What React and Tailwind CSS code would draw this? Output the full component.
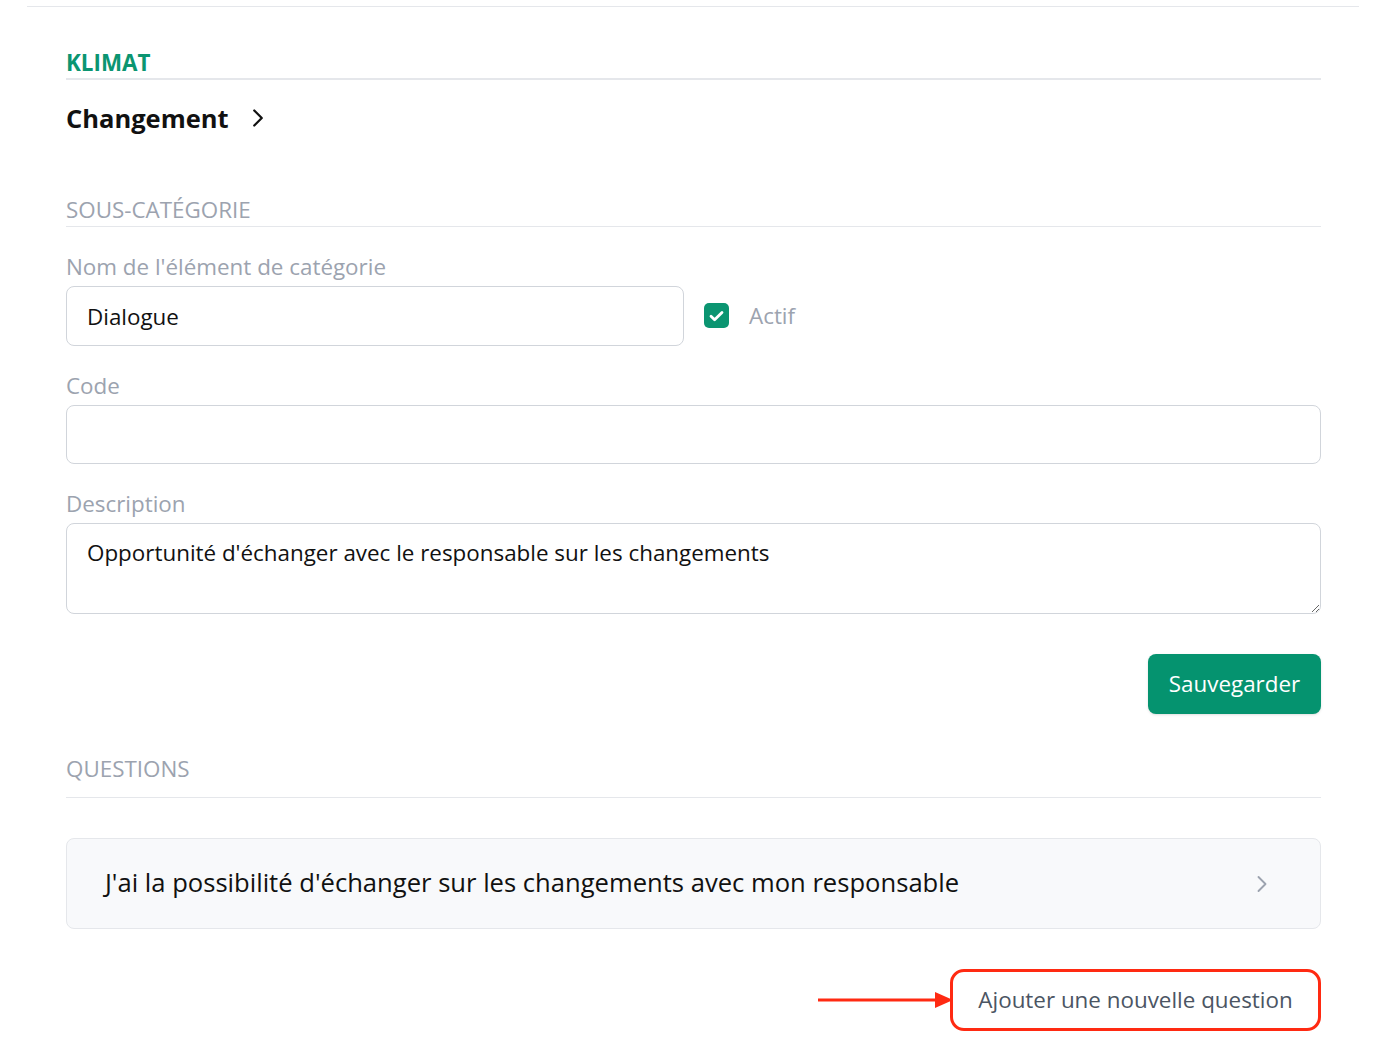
import React from 'react';
import { ChevronRight } from 'lucide-react';

const SectionTitle = ({ children, className = '' }) => (
    <div className={`border-b border-[#e5e7eb] ${className}`}>
        <h3 className="text-[22.4px] leading-[30px] uppercase text-[#9ca3af]">{children}</h3>
    </div>
);

const Label = ({ children, className = '' }) => (
    <label className={`block text-[22.4px] leading-[30px] text-[#9ca3af] ${className}`}>{children}</label>
);

export default function App() {
    return (
        <div className="min-h-screen bg-white font-['Open_Sans',sans-serif] pt-[6px] px-[27px] pb-[19px]">
            <div className="border-t border-[#e5e7eb] px-[39px] pr-[38px]">
                {/* Category header */}
                <div className="mt-[41px] border-b-2 border-[#e5e7eb]">
                    <h2 className="text-[22.4px] leading-[30px] font-bold uppercase text-[#0b9571]">Klimat</h2>
                </div>
                <div className="mt-[20px] flex items-center gap-[14px]">
                    <span className="text-[25.5px] leading-[36px] font-bold text-[#111]">Changement</span>
                    <ChevronRight size={30} strokeWidth={1.8} className="text-[#111]" />
                </div>

                {/* Sub-category form */}
                <SectionTitle className="mt-[59px] pb-[1px]">Sous-catégorie</SectionTitle>

                <Label className="mt-[25px] mb-[4px]">Nom de l'élément de catégorie</Label>
                <div className="flex items-center gap-[20px]">
                    <input
                        defaultValue="Dialogue"
                        className="w-[618px] h-[60px] rounded-lg border border-[#d1d5db] px-[20px] text-[22.4px] text-[#111] outline-none"
                    />
                    <label className="flex items-center gap-[20px]">
                        <span className="w-[25px] h-[25px] rounded-[5px] bg-[#0b9571] flex items-center justify-center">
                            <svg width="15" height="12" viewBox="0 0 15 12" fill="none">
                                <path d="M2 6.2l3.6 3.6L13 2.4" stroke="white" strokeWidth="2.8" strokeLinecap="round" strokeLinejoin="round" />
                            </svg>
                        </span>
                        <span className="text-[22.4px] text-[#9ca3af]">Actif</span>
                    </label>
                </div>

                <Label className="mt-[25px] mb-[4px]">Code</Label>
                <input className="w-full h-[59px] rounded-lg border border-[#d1d5db] px-[20px] text-[22.4px] outline-none" />

                <Label className="mt-[25px] mb-[4px]">Description</Label>
                <textarea
                    defaultValue="Opportunité d'échanger avec le responsable sur les changements"
                    className="block w-full h-[91px] rounded-lg border border-[#d1d5db] px-[20px] pt-[14px] text-[22.4px] leading-[30px] text-[#111] outline-none"
                />

                <div className="mt-[40px] flex justify-end">
                    <button className="h-[60px] w-[173px] rounded-lg bg-[#05936f] text-white text-[22.4px] shadow-sm">
                        Sauvegarder
                    </button>
                </div>

                {/* Questions */}
                <SectionTitle className="mt-[40px] pb-[13px]">Questions</SectionTitle>

                <div className="mt-[40px] h-[91px] rounded-lg border border-[#e5e7eb] bg-[#f8f9fb] flex items-center justify-between pl-[38px] pr-[44px]">
                    <span className="text-[25.6px] text-[#111]">J'ai la possibilité d'échanger sur les changements avec mon responsable</span>
                    <ChevronRight size={28} strokeWidth={1.6} className="text-[#9ca3af]" />
                </div>

                <div className="mt-[40px] flex justify-end">
                    <div className="relative">
                        <svg className="absolute right-full top-1/2 -translate-y-1/2 mr-[-4px]" width="136" height="22" viewBox="0 0 136 22">
                            <line x1="0" y1="11" x2="120" y2="11" stroke="#ff2a12" strokeWidth="3" />
                            <path d="M117 3 L135 11 L117 19 Z" fill="#ff2a12" />
                        </svg>
                        <button className="h-[62px] w-[371px] rounded-[14px] border-[3px] border-[#ff2a12] bg-white text-[22.4px] text-[#4b5563]">
                            Ajouter une nouvelle question
                        </button>
                    </div>
                </div>
            </div>
        </div>
    );
}
